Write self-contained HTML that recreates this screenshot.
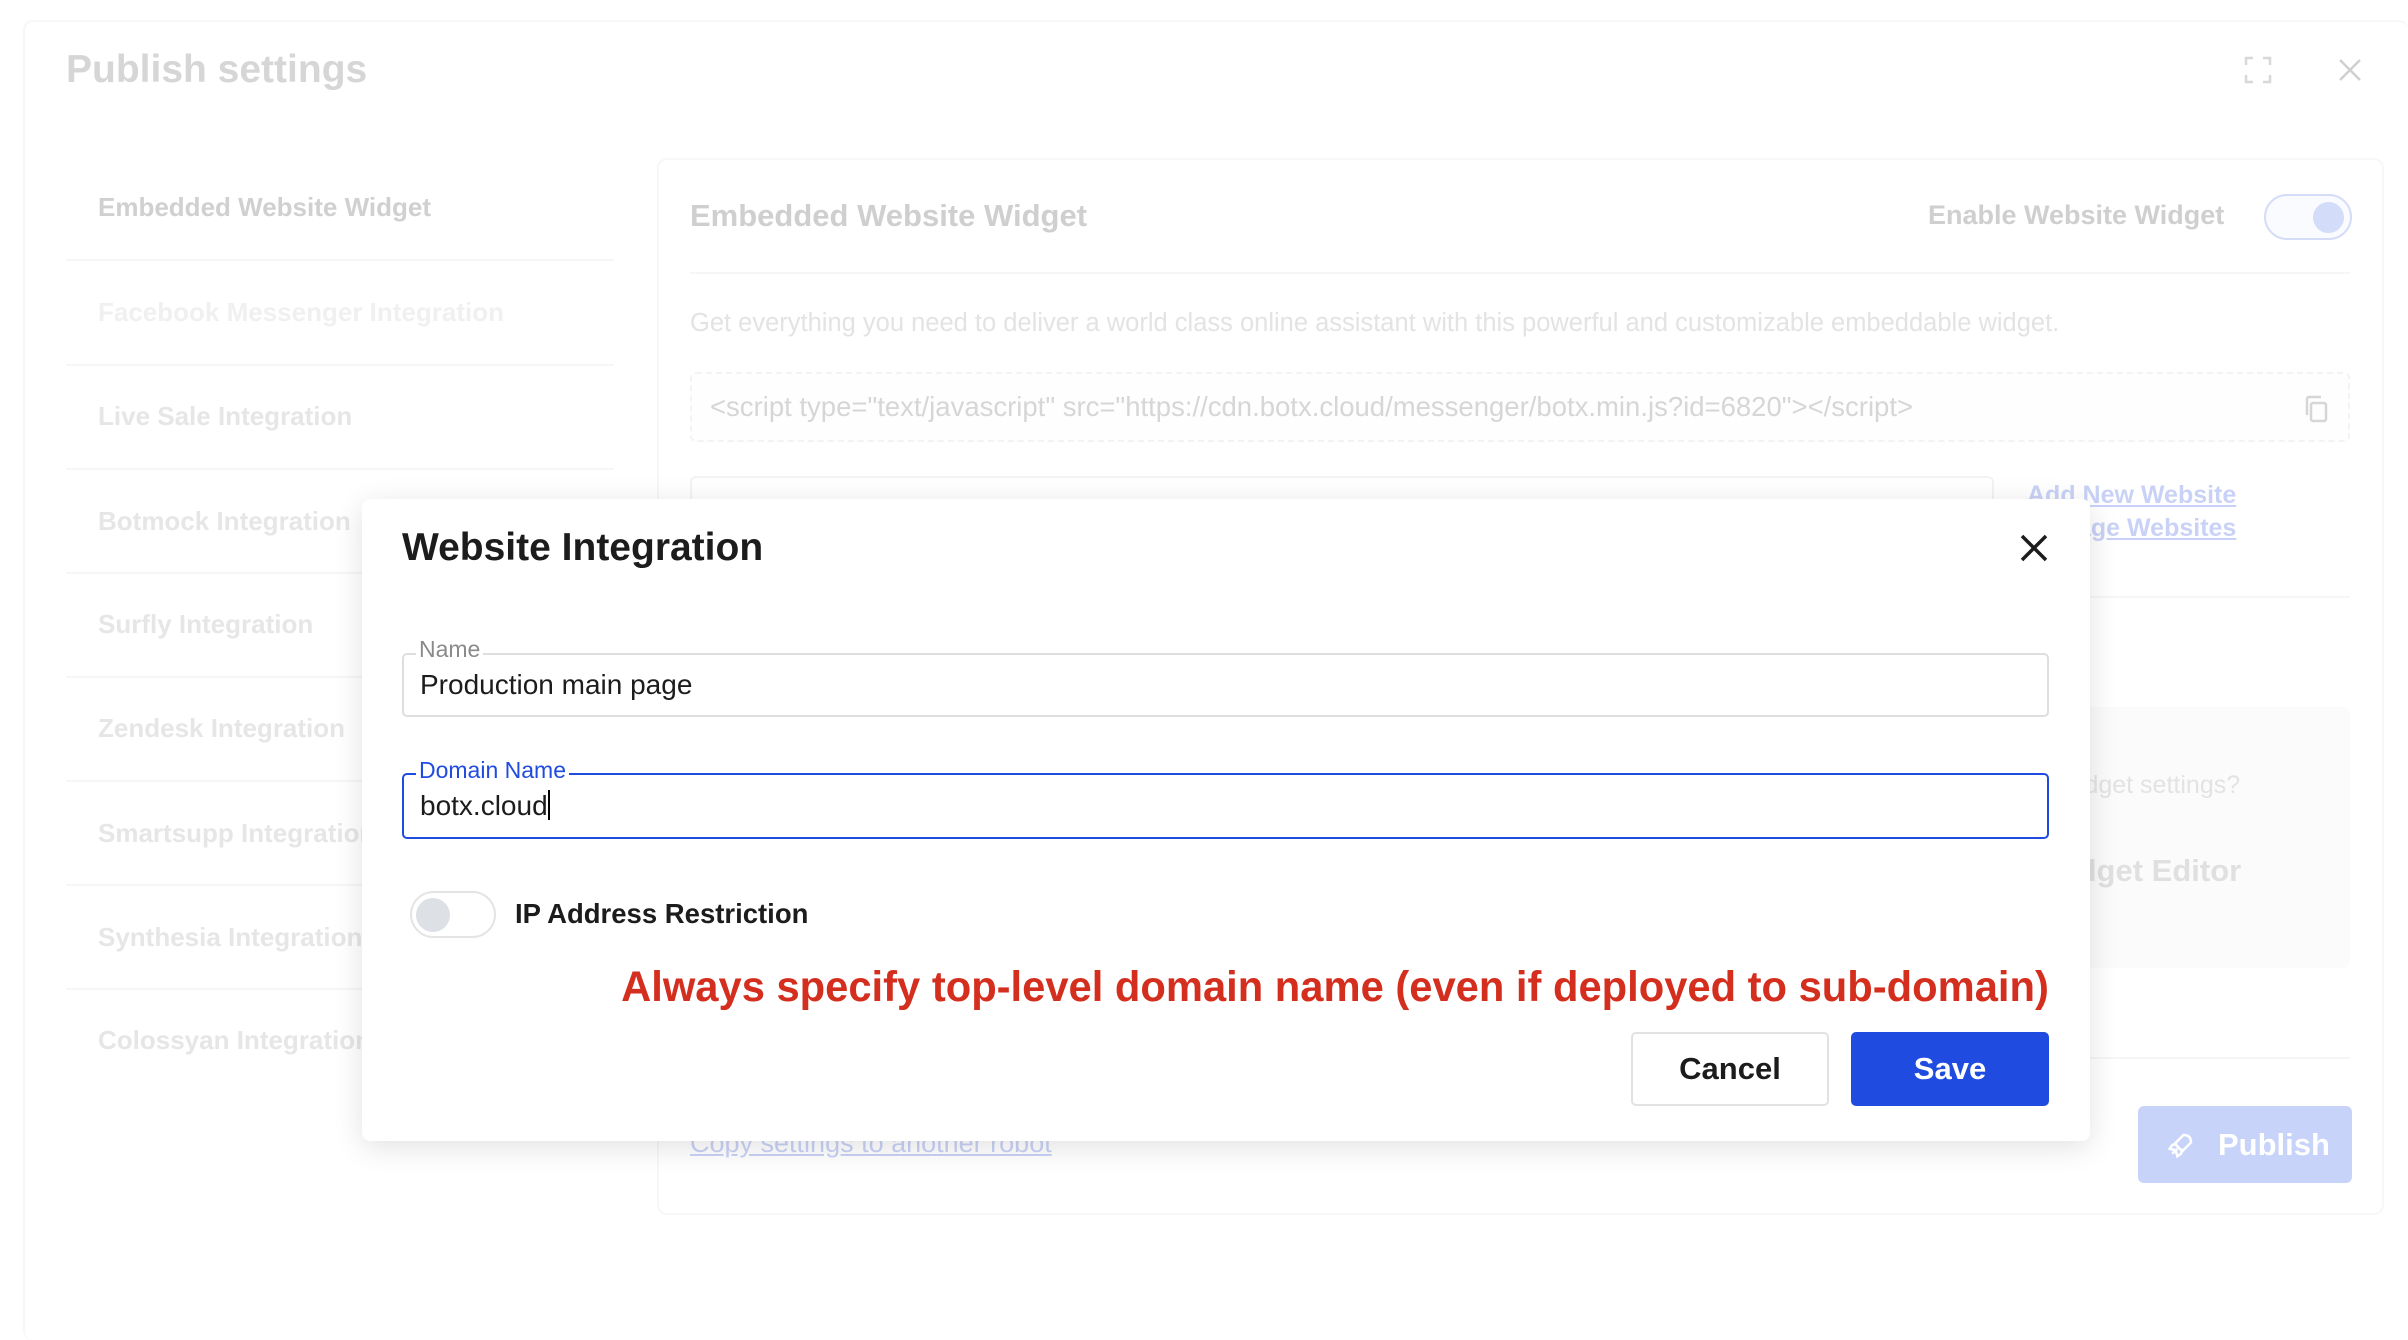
<!DOCTYPE html>
<html><head><meta charset="utf-8"><style>
*{box-sizing:border-box;margin:0;padding:0}
body{width:2408px;height:1340px;overflow:hidden;background:#fff;font-family:"Liberation Sans",Arial,sans-serif;position:relative}
.a{position:absolute;white-space:nowrap}
.nav{left:98px;font-size:26px;font-weight:bold;color:#e6e6e6}
.sep{position:absolute;height:2px;background:#f6f6f6}
</style></head><body>
<div class="a" style="left:23px;top:20px;width:2385px;height:1320px;border-left:2px solid #f7f7f7;border-top:2px solid #f7f7f7;border-radius:10px"></div>
<div class="a" style="left:66px;top:48px;font-size:39px;font-weight:bold;color:#d6d6d6">Publish settings</div>
<svg class="a" style="left:2244px;top:56px" width="28" height="28" viewBox="0 0 28 28" fill="none" stroke="#d8d8d8" stroke-width="2.5"><path d="M2 9V2h7M19 2h7v7M26 19v7h-7M9 26H2v-7"/></svg>
<svg class="a" style="left:2338px;top:58px" width="24" height="24" viewBox="0 0 24 24" stroke="#d0d0d0" stroke-width="2.5"><path d="M2 2L22 22M22 2L2 22"/></svg>

<div class="a nav" style="top:192px;color:#d0d0d0">Embedded Website Widget</div>
<div class="sep" style="left:66px;width:548px;top:259px"></div>
<div class="a nav" style="top:297px;color:#f0f0f0">Facebook Messenger Integration</div>
<div class="sep" style="left:66px;width:548px;top:364px"></div>
<div class="a nav" style="top:401px">Live Sale Integration</div>
<div class="sep" style="left:66px;width:548px;top:468px"></div>
<div class="a nav" style="top:506px">Botmock Integration</div>
<div class="sep" style="left:66px;width:548px;top:572px"></div>
<div class="a nav" style="top:609px">Surfly Integration</div>
<div class="sep" style="left:66px;width:548px;top:676px"></div>
<div class="a nav" style="top:713px">Zendesk Integration</div>
<div class="sep" style="left:66px;width:548px;top:780px"></div>
<div class="a nav" style="top:818px">Smartsupp Integration</div>
<div class="sep" style="left:66px;width:548px;top:884px"></div>
<div class="a nav" style="top:922px">Synthesia Integration</div>
<div class="sep" style="left:66px;width:548px;top:988px"></div>
<div class="a nav" style="top:1025px">Colossyan Integration</div>

<div class="a" style="left:657px;top:158px;width:1727px;height:1057px;border:2px solid #f7f7f7;border-radius:10px"></div>
<div class="a" style="left:690px;top:198px;font-size:31px;font-weight:bold;color:#cfcfcf">Embedded Website Widget</div>
<div class="a" style="left:1928px;top:200px;font-size:27px;font-weight:bold;color:#cfcfcf">Enable Website Widget</div>
<div class="a" style="left:2264px;top:194px;width:88px;height:46px;border:2px solid #d4dcf8;border-radius:23px;background:#fafbff"><div style="position:absolute;right:6px;top:6px;width:31px;height:31px;border-radius:50%;background:#d3dcf8"></div></div>
<div class="sep" style="left:690px;width:1660px;top:272px"></div>
<div class="a" style="left:690px;top:309px;font-size:25.5px;color:#e3e3e3">Get everything you need to deliver a world class online assistant with this powerful and customizable embeddable widget.</div>
<div class="a" style="left:690px;top:372px;width:1660px;height:70px;border:2px dashed #f3f3f3;border-radius:6px;background:#fefefe"></div>
<div class="a" style="left:710px;top:391px;font-size:27.5px;color:#d6d6d6">&lt;script type="text/javascript" src="https://cdn.botx.cloud/messenger/botx.min.js?id=6820"&gt;&lt;/script&gt;</div>
<svg class="a" style="left:2304px;top:395px" width="26" height="28" viewBox="0 0 26 28" fill="none" stroke="#d6d6d6" stroke-width="2.5"><rect x="7" y="8" width="15" height="18" rx="2"/><path d="M3 20V4a2 2 0 012-2h12"/></svg>
<div class="a" style="left:690px;top:476px;width:1304px;height:60px;border:2px solid #f3f3f3;border-radius:6px"></div>
<div class="a" style="left:2027px;top:481px;font-size:25px;font-weight:bold;color:#c9d2f6;text-decoration:underline">Add New Website</div>
<div class="a" style="left:2027px;top:514px;font-size:25px;font-weight:bold;color:#c9d2f6;text-decoration:underline">Manage Websites</div>
<div class="sep" style="left:690px;width:1660px;top:596px"></div>
<div class="a" style="left:2066px;top:707px;width:284px;height:261px;background:#fbfbfb;border-radius:8px"></div>
<div class="a" style="left:2040px;top:771px;font-size:25px;color:#e3e3e3">e widget settings?</div>
<div class="a" style="left:2040px;top:853px;font-size:31px;font-weight:bold;color:#e0e0e0">Widget Editor</div>
<div class="sep" style="left:690px;width:1660px;top:1057px"></div>
<div class="a" style="left:690px;top:1128px;font-size:27px;color:#c9d2f6;text-decoration:underline">Copy settings to another robot</div>
<div class="a" style="left:2138px;top:1106px;width:214px;height:77px;background:#c7d3f8;border-radius:6px;color:#fff;font-size:31px;font-weight:bold;line-height:77px;padding-left:80px">Publish</div>
<svg class="a" style="left:2166px;top:1130px" width="30" height="30" viewBox="0 0 24 24" fill="none" stroke="#fff" stroke-width="2"><path d="M5 19l4-4M14 4c4 0 6 2 6 6l-7 7-6-6zM9 11l-4 1-2 3 4 1M13 15l-1 4-3 2-1-4"/></svg>

<div class="a" style="left:362px;top:499px;width:1728px;height:642px;background:#fff;border-radius:8px;box-shadow:0 6px 30px rgba(0,0,0,0.12)"></div>
<div class="a" style="left:402px;top:526px;font-size:39px;font-weight:bold;color:#1c1c1c">Website Integration</div>
<svg class="a" style="left:2020px;top:534px" width="28" height="28" viewBox="0 0 28 28" stroke="#1c1c1c" stroke-width="3.5"><path d="M2 2L26 26M26 2L2 26"/></svg>
<div class="a" style="left:402px;top:653px;width:1647px;height:64px;border:2px solid #dedede;border-radius:5px"></div>
<div class="a" style="left:416px;top:636px;font-size:23px;color:#8a8a8a;background:#fff;padding:0 3px">Name</div>
<div class="a" style="left:420px;top:669px;font-size:28px;color:#1c1c1c">Production main page</div>
<div class="a" style="left:402px;top:773px;width:1647px;height:66px;border:2px solid #1f4be0;border-radius:5px"></div>
<div class="a" style="left:416px;top:757px;font-size:23px;color:#1f4be0;background:#fff;padding:0 3px">Domain Name</div>
<div class="a" style="left:420px;top:790px;font-size:28px;color:#1c1c1c">botx.cloud<span style="display:inline-block;width:2px;height:30px;background:#000;vertical-align:-5px"></span></div>
<div class="a" style="left:410px;top:891px;width:86px;height:47px;border:2px solid #e4e4e4;border-radius:24px"><div style="position:absolute;left:4px;top:5px;width:34px;height:34px;border-radius:50%;background:#dde0e4"></div></div>
<div class="a" style="left:515px;top:898px;font-size:27.5px;font-weight:bold;color:#1c1c1c">IP Address Restriction</div>
<div class="a" style="right:359px;top:963px;font-size:43px;font-weight:bold;color:#d42e1e;transform:scaleX(0.97);transform-origin:right">Always specify top-level domain name (even if deployed to sub-domain)</div>
<div class="a" style="left:1631px;top:1032px;width:198px;height:74px;border:2px solid #e2e2e2;border-radius:5px;text-align:center;line-height:70px;font-size:31px;font-weight:bold;color:#1c1c1c">Cancel</div>
<div class="a" style="left:1851px;top:1032px;width:198px;height:74px;background:#1f4be0;border-radius:5px;text-align:center;line-height:74px;font-size:31px;font-weight:bold;color:#fff">Save</div>
</body></html>
